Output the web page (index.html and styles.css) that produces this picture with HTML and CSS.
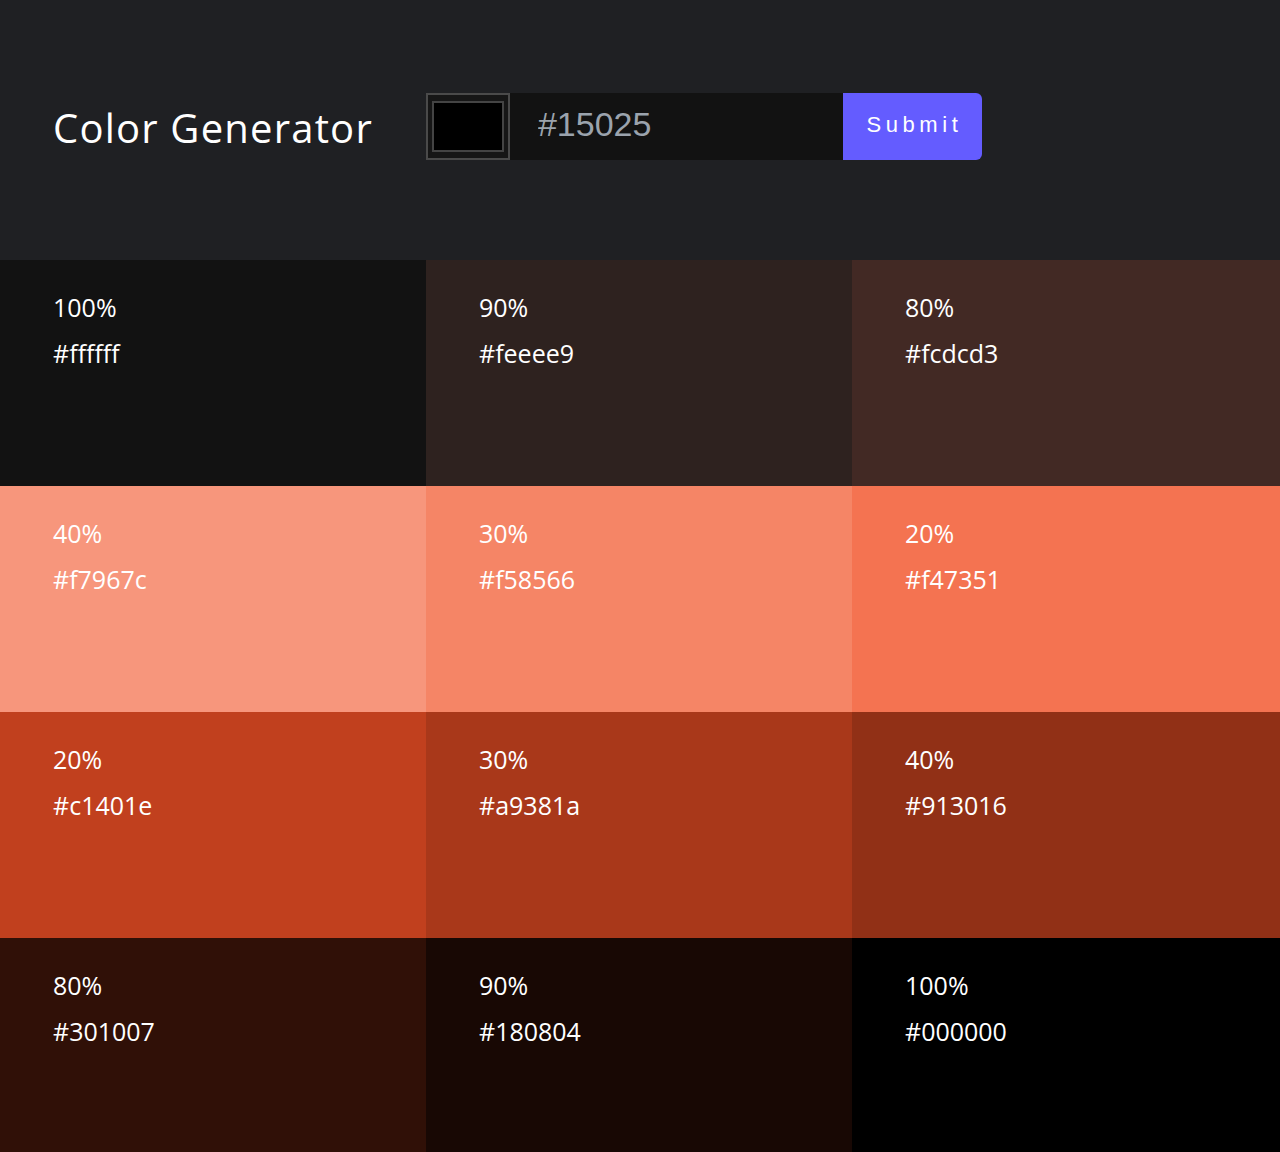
FILE: index.html
```html
<!DOCTYPE html>
<html>
<head>
<meta charset="utf-8">
<link rel="stylesheet" href="styles.css">
</head>
<body>
<header class="header">
  <h1 class="title">Color Generator</h1>
  <form class="form">
    <div class="picker"><div class="swatch"></div></div>
    <input class="hex-input" type="text" value="#15025">
    <button class="submit" type="button">Submit</button>
  </form>
</header>
<section class="grid">
  <div class="cell c1"><p>100%</p><p>#ffffff</p></div>
  <div class="cell c2"><p>90%</p><p>#feeee9</p></div>
  <div class="cell c3"><p>80%</p><p>#fcdcd3</p></div>
  <div class="cell c4"><p>40%</p><p>#f7967c</p></div>
  <div class="cell c5"><p>30%</p><p>#f58566</p></div>
  <div class="cell c6"><p>20%</p><p>#f47351</p></div>
  <div class="cell c7"><p>20%</p><p>#c1401e</p></div>
  <div class="cell c8"><p>30%</p><p>#a9381a</p></div>
  <div class="cell c9"><p>40%</p><p>#913016</p></div>
  <div class="cell c10"><p>80%</p><p>#301007</p></div>
  <div class="cell c11"><p>90%</p><p>#180804</p></div>
  <div class="cell c12"><p>100%</p><p>#000000</p></div>
</section>
</body>
</html>
```
FILE: styles.css
```css
* { box-sizing: border-box; }
body {
  margin: 0;
  background: #1f2023;
  font-family: "Open Sans", "Noto Sans", sans-serif;
  color: #fff;
}
.header {
  height: 260px;
  background: #1f2023;
  display: flex;
  align-items: center;
  padding: 0 53px;
  padding-bottom: 6px;
}
.title {
  margin: 0 53px 0 0;
  font-weight: 400;
  font-size: 40px;
  letter-spacing: 1.2px;
  color: #fff;
}
.form {
  display: flex;
  height: 67px;
  margin-top: -2px;
}
.picker {
  width: 84px;
  height: 67px;
  border: 2px solid #4a4a4a;
  background: #161616;
  padding: 6px 4px 6px 4px;
}
.swatch {
  width: 100%;
  height: 100%;
  background: #000;
  border: 2px solid #444;
}
.hex-input {
  width: 333px;
  height: 67px;
  border: none;
  outline: none;
  background: #121212;
  color: #9ba3ad;
  font-family: "Liberation Sans", Arial, sans-serif;
  font-size: 34px;
  padding: 0 0 3px 28px;
}
.submit {
  width: 139px;
  height: 67px;
  border: none;
  background: #645cff;
  color: #fff;
  font-family: "Liberation Sans", Arial, sans-serif;
  font-size: 22px;
  letter-spacing: 4.6px;
  border-radius: 0 6px 6px 0;
  padding: 0 0 3px 4px;
}
.grid {
  display: grid;
  grid-template-columns: 426px 426px 1fr;
  grid-auto-rows: 226px;
}
.cell {
  padding: 30px 53px;
}
.cell p {
  margin: 0 0 12px 0;
  font-size: 25px;
  line-height: 34px;
  color: #fff;
}
.c1 { background: #121212; }
.c2 { background: #2e221f; }
.c3 { background: #422924; }
.c4 { background: #f7967c; }
.c5 { background: #f58566; }
.c6 { background: #f47351; }
.c7 { background: #c1401e; }
.c8 { background: #a9381a; }
.c9 { background: #913016; }
.c10 { background: #301007; }
.c11 { background: #180804; }
.c12 { background: #000000; }
```
